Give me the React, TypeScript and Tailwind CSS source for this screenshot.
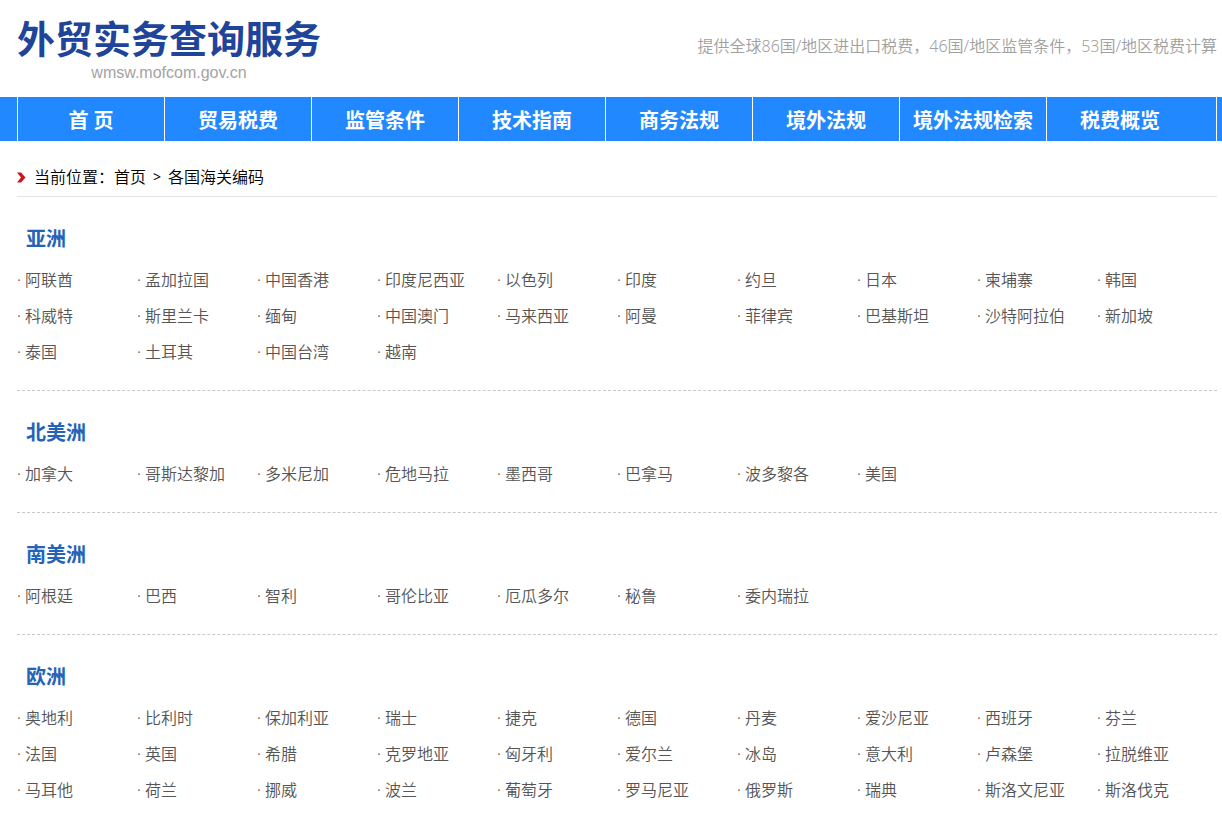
const navItems = ['首 页', '贸易税费', '监管条件', '技术指南', '商务法规', '境外法规', '境外法规检索', '税费概览'];

const regions: { name: string; countries: string[] }[] = [
  {
    name: '亚洲',
    countries: [
      '阿联酋', '孟加拉国', '中国香港', '印度尼西亚', '以色列', '印度', '约旦', '日本', '柬埔寨', '韩国',
      '科威特', '斯里兰卡', '缅甸', '中国澳门', '马来西亚', '阿曼', '菲律宾', '巴基斯坦', '沙特阿拉伯', '新加坡',
      '泰国', '土耳其', '中国台湾', '越南',
    ],
  },
  {
    name: '北美洲',
    countries: ['加拿大', '哥斯达黎加', '多米尼加', '危地马拉', '墨西哥', '巴拿马', '波多黎各', '美国'],
  },
  {
    name: '南美洲',
    countries: ['阿根廷', '巴西', '智利', '哥伦比亚', '厄瓜多尔', '秘鲁', '委内瑞拉'],
  },
  {
    name: '欧洲',
    countries: [
      '奥地利', '比利时', '保加利亚', '瑞士', '捷克', '德国', '丹麦', '爱沙尼亚', '西班牙', '芬兰',
      '法国', '英国', '希腊', '克罗地亚', '匈牙利', '爱尔兰', '冰岛', '意大利', '卢森堡', '拉脱维亚',
      '马耳他', '荷兰', '挪威', '波兰', '葡萄牙', '罗马尼亚', '俄罗斯', '瑞典', '斯洛文尼亚', '斯洛伐克',
    ],
  },
];

function Header() {
  return (
    <header className="flex items-start justify-between pt-[15px] pr-[5px] pb-[13px] pl-[17px]">
      <a href="#" className="flex flex-col items-center">
        <h1 className="text-[38px] leading-[46px] font-bold text-[#20449a]">外贸实务查询服务</h1>
        <span className="font-['Liberation_Sans',sans-serif] text-base leading-[23px] text-[#a3a3a3]">
          wmsw.mofcom.gov.cn
        </span>
      </a>
      <p className="pt-[19px] text-base leading-6 font-[350] text-[#a0a0a0]">
        提供全球86国/地区进出口税费，46国/地区监管条件，53国/地区税费计算
      </p>
    </header>
  );
}

function MainNav() {
  return (
    <nav className="bg-[#2188ff] pr-[5px] pl-[17px]">
      <ul className="flex border-r border-white">
        {navItems.map((item) => (
          <li key={item} className="w-[147px] border-l border-white">
            <a href="#" className="block pt-1 text-center text-xl leading-10 font-bold whitespace-nowrap text-white">
              {item}
            </a>
          </li>
        ))}
      </ul>
    </nav>
  );
}

function Breadcrumb() {
  return (
    <div className="flex h-14 items-center border-b border-[#e5e5e5] pt-4 text-base leading-6 font-[350] text-black">
      <svg width="9" height="12" viewBox="0 0 9 12" className="mr-2 shrink-0" aria-hidden="true">
        <path d="M0 1.5H4L8.5 6.5L4 11.5H0L4 6.5Z" fill="#c9151b" />
      </svg>
      <span>当前位置：</span>
      <a href="#">首页</a>
      <span className="mx-[7px] text-sm font-normal">&gt;</span>
      <span>各国海关编码</span>
    </div>
  );
}

function Region({ name, countries }: { name: string; countries: string[] }) {
  return (
    <section className="border-b border-dashed border-[#c8c8c8] pt-[27px] pb-5 last:border-b-0 last:pb-4">
      <h2 className="mb-2 pl-[9px] text-xl leading-[30px] font-bold text-[#2463b8]">{name}</h2>
      <ul className="grid grid-cols-10">
        {countries.map((country) => (
          <li key={country} className="text-base leading-9 font-[350] whitespace-nowrap text-[#555]">
            · <a href="#">{country}</a>
          </li>
        ))}
      </ul>
    </section>
  );
}

export default function App() {
  return (
    <div className="bg-white font-['Noto_Sans','Noto_Sans_CJK_SC',sans-serif]" lang="zh-CN">
      <Header />
      <MainNav />
      <main className="pr-[5px] pl-[17px]">
        <Breadcrumb />
        <div>
          {regions.map((region) => (
            <Region key={region.name} name={region.name} countries={region.countries} />
          ))}
        </div>
      </main>
    </div>
  );
}
